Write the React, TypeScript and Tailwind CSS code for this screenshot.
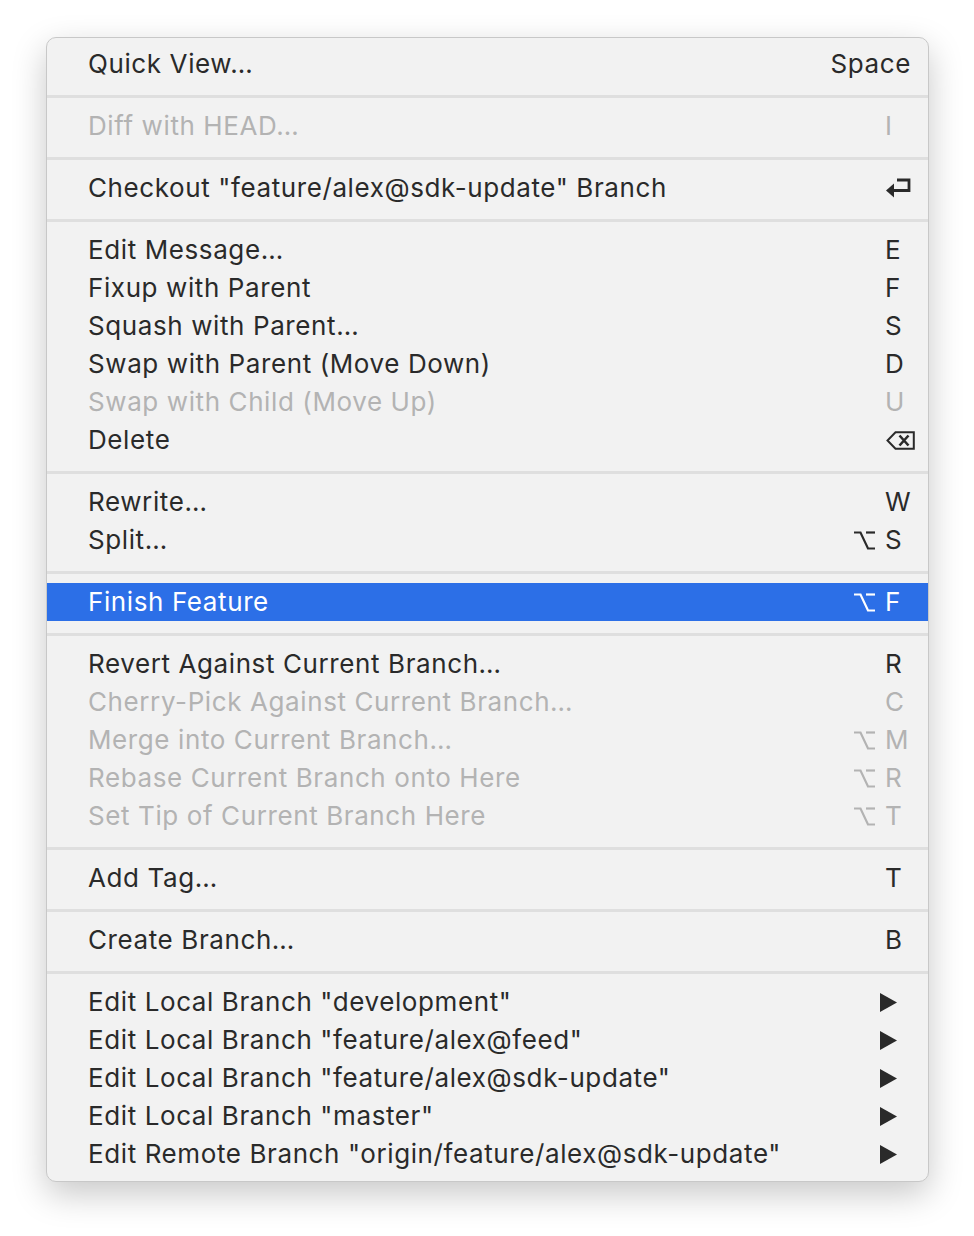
import React from 'react';

type Item = {
  label: string;
  key?: string;
  mod?: boolean;
  icon?: 'return' | 'delete' | 'submenu';
  disabled?: boolean;
  active?: boolean;
};

const groups: Item[][] = [
  [{ label: 'Quick View…', key: 'Space' }],
  [{ label: 'Diff with HEAD…', key: 'I', disabled: true }],
  [{ label: 'Checkout "feature/alex@sdk-update" Branch', icon: 'return' }],
  [
    { label: 'Edit Message…', key: 'E' },
    { label: 'Fixup with Parent', key: 'F' },
    { label: 'Squash with Parent…', key: 'S' },
    { label: 'Swap with Parent (Move Down)', key: 'D' },
    { label: 'Swap with Child (Move Up)', key: 'U', disabled: true },
    { label: 'Delete', icon: 'delete' },
  ],
  [
    { label: 'Rewrite…', key: 'W' },
    { label: 'Split…', key: 'S', mod: true },
  ],
  [{ label: 'Finish Feature', key: 'F', mod: true, active: true }],
  [
    { label: 'Revert Against Current Branch…', key: 'R' },
    { label: 'Cherry-Pick Against Current Branch…', key: 'C', disabled: true },
    { label: 'Merge into Current Branch…', key: 'M', mod: true, disabled: true },
    { label: 'Rebase Current Branch onto Here', key: 'R', mod: true, disabled: true },
    { label: 'Set Tip of Current Branch Here', key: 'T', mod: true, disabled: true },
  ],
  [{ label: 'Add Tag…', key: 'T' }],
  [{ label: 'Create Branch…', key: 'B' }],
  [
    { label: 'Edit Local Branch "development"', icon: 'submenu' },
    { label: 'Edit Local Branch "feature/alex@feed"', icon: 'submenu' },
    { label: 'Edit Local Branch "feature/alex@sdk-update"', icon: 'submenu' },
    { label: 'Edit Local Branch "master"', icon: 'submenu' },
    { label: 'Edit Remote Branch "origin/feature/alex@sdk-update"', icon: 'submenu' },
  ],
];

const OptionKey = () => (
  <svg width="21" height="19" viewBox="0 0 21 19" fill="none" stroke="currentColor" strokeWidth="2.2">
    <path d="M0 1.5H6.5L14 17.5H21" />
    <path d="M12 1.5H21" />
  </svg>
);

const ReturnKey = () => (
  <svg width="25" height="20" viewBox="0 0 25 20" fill="none">
    <path d="M11 2H23V12.5H6" stroke="currentColor" strokeWidth="2.8" />
    <path d="M0 12.5L8 5.5V19.5Z" fill="currentColor" />
  </svg>
);

const DeleteKey = () => (
  <svg width="29" height="19" viewBox="0 0 29 19" fill="none" stroke="currentColor">
    <path d="M9.5 1.2H27.8V17.8H9.5L1.5 9.5Z" strokeWidth="2" strokeLinejoin="miter" />
    <path d="M13.5 4.5L22.5 14.5M22.5 4.5L13.5 14.5" strokeWidth="2.6" />
  </svg>
);

const Submenu = () => (
  <svg width="17" height="19" viewBox="0 0 17 19">
    <path d="M0 0L17 9.5L0 19Z" fill="currentColor" />
  </svg>
);

function Shortcut({ item }: { item: Item }) {
  if (item.icon === 'return') return <span className="mr-[2px] flex"><ReturnKey /></span>;
  if (item.icon === 'delete') return <span className="-mr-[2px] flex"><DeleteKey /></span>;
  if (item.icon === 'submenu') return <span className="mr-[16px] flex"><Submenu /></span>;
  if (item.key === 'Space') return <span className="mr-[2px]">Space</span>;
  return (
    <div className="flex items-center">
      {item.mod && (
        <span className="mr-[10px] flex">
          <OptionKey />
        </span>
      )}
      <span className="w-[28px]">{item.key}</span>
    </div>
  );
}

function Row({ item }: { item: Item }) {
  const color = item.active
    ? 'bg-[#2c6fe7] text-white'
    : item.disabled
      ? 'text-[#b3b3b3]'
      : 'text-[#2a2a2a]';
  return (
    <div className={`flex h-[38px] items-center justify-between pl-[42px] pr-[15px] ${color}`}>
      <span className="-ml-[1px]">{item.label}</span>
      <Shortcut item={item} />
    </div>
  );
}

export default function App() {
  return (
    <div className="min-h-screen bg-white pl-[46px] pt-[37px]" style={{ fontFamily: 'Inter, "Noto Sans", sans-serif' }}>
      <div className="w-[883px] overflow-hidden rounded-[10px] border border-[#c8c8c8] bg-[#f2f2f2] pb-[8px] pt-[7px] text-[26px] leading-none tracking-[0.6px] shadow-[0_12px_34px_rgba(0,0,0,0.22)]">
        {groups.map((group, gi) => (
          <div key={gi}>
            {gi > 0 && (
              <div className="pb-[9px] pt-[12px]">
                <div className="h-[3px] bg-[#dfdfdf]" />
              </div>
            )}
            {group.map((item, ii) => (
              <Row key={ii} item={item} />
            ))}
          </div>
        ))}
      </div>
    </div>
  );
}
